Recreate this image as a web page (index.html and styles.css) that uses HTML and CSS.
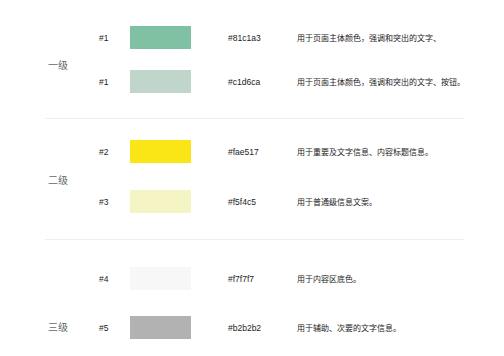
FILE: index.html
```html
<!DOCTYPE html>
<html lang="zh">
<head>
<meta charset="utf-8">
<link rel="stylesheet" href="styles.css">
</head>
<body>
<div class="page">
  <section class="group g1">
    <div class="label">一级</div>
    <div class="rows">
      <div class="row"><span class="num">#1</span><span class="swatch c1"></span><span class="hex">#81c1a3</span><span class="desc">用于页面主体颜色，强调和突出的文字、</span></div>
      <div class="row"><span class="num">#1</span><span class="swatch c2"></span><span class="hex">#c1d6ca</span><span class="desc">用于页面主体颜色，强调和突出的文字、按钮。</span></div>
    </div>
  </section>
  <section class="group g2">
    <div class="label">二级</div>
    <div class="rows">
      <div class="row"><span class="num">#2</span><span class="swatch c3"></span><span class="hex">#fae517</span><span class="desc">用于重要及文字信息、内容标题信息。</span></div>
      <div class="row"><span class="num">#3</span><span class="swatch c4"></span><span class="hex">#f5f4c5</span><span class="desc">用于普通级信息文案。</span></div>
    </div>
  </section>
  <section class="group g3">
    <div class="label label-bottom">三级</div>
    <div class="rows">
      <div class="row"><span class="num">#4</span><span class="swatch c5"></span><span class="hex">#f7f7f7</span><span class="desc">用于内容区底色。</span></div>
      <div class="row"><span class="num">#5</span><span class="swatch c6"></span><span class="hex">#b2b2b2</span><span class="desc">用于辅助、次要的文字信息。</span></div>
    </div>
  </section>
</div>
</body>
</html>
```
FILE: styles.css
```css
html, body {
  margin: 0;
  padding: 0;
  background: #ffffff;
}
body {
  font-family: "Liberation Sans", "Noto Sans CJK SC", sans-serif;
  color: #222222;
  width: 504px;
  height: 356px;
  overflow: hidden;
}
.page {
  margin: 0 40px 0 45px;
}
.group {
  display: flex;
  align-items: center;
  padding-left: 3px;
}
.g1 {
  padding-top: 26px;
  padding-bottom: 25px;
  border-bottom: 1px solid #efefef;
}
.g2 {
  padding-top: 21px;
  padding-bottom: 26px;
  border-bottom: 1px solid #efefef;
}
.g3 {
  padding-top: 27px;
}
.g1 .rows { gap: 21px; }
.g2 .rows { gap: 27px; }
.g3 .rows { gap: 26px; }
.label {
  width: 51px;
  flex: none;
  font-size: 10px;
  color: #666666;
}
.g1 .label { margin-top: 10px; }
.g2 .label { margin-top: 6px; }
.label-bottom {
  align-self: flex-end;
  line-height: 23px;
}
.rows {
  display: flex;
  flex-direction: column;
}
.row {
  display: flex;
  align-items: center;
  height: 23px;
  font-size: 8px;
}
.num {
  width: 31px;
  flex: none;
  font-size: 8.5px;
}
.swatch {
  width: 61px;
  height: 23px;
  flex: none;
  margin-right: 37px;
}
.hex {
  width: 69px;
  flex: none;
  font-size: 8.5px;
}
.desc {
  white-space: nowrap;
}
.c1 { background: #81c1a3; }
.c2 { background: #c1d6ca; }
.c3 { background: #fae517; }
.c4 { background: #f5f4c5; }
.c5 { background: #f7f7f7; }
.c6 { background: #b2b2b2; }
```
